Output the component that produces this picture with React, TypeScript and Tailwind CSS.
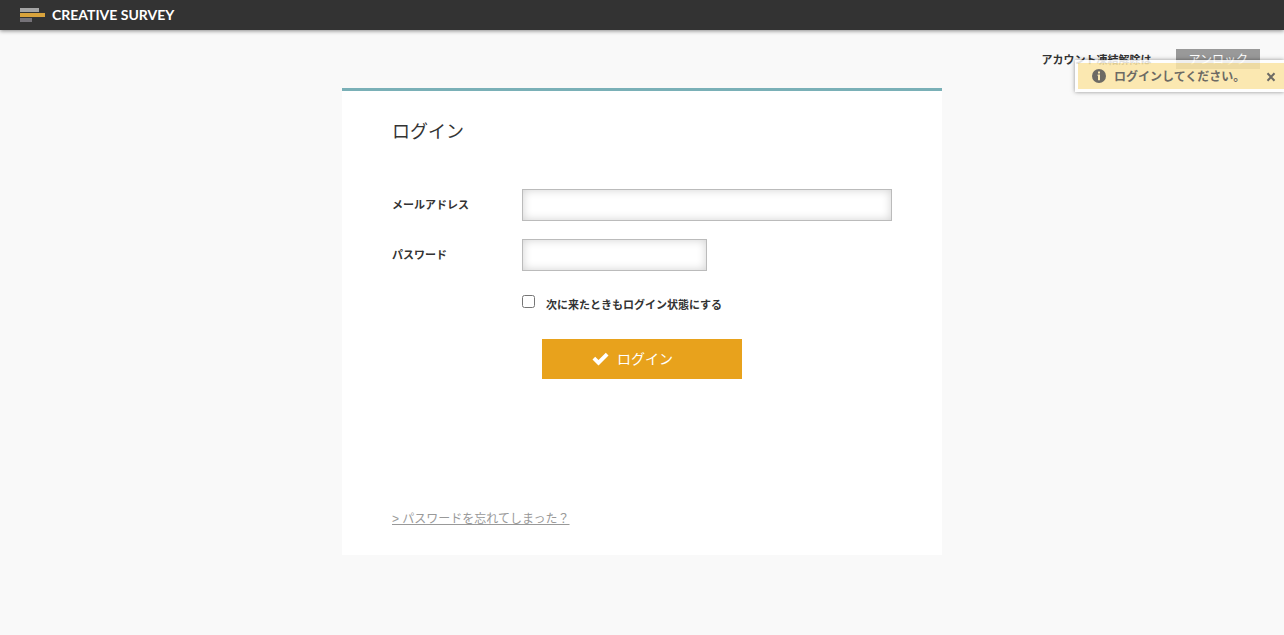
import React, { useState } from "react";

const inputClass =
  "h-8 border border-[#bbb] bg-white px-2 text-sm text-[#333] shadow-[inset_0_0_10px_rgba(0,0,0,0.18)] outline-none focus:border-[#6fb0b6]";

const Logo: React.FC = () => (
  <a href="#" className="flex items-center gap-[7px] text-white">
    <svg className="h-[14px] w-[25px]" viewBox="0 0 25 14" aria-hidden="true">
      <rect width="19" height="4" fill="#a5a5a5" />
      <rect y="5" width="25" height="4" fill="#d9a33c" />
      <rect y="10" width="12" height="4" fill="#757278" />
    </svg>
    <span className="font-[Lato,sans-serif] text-[14px] leading-4 font-bold">CREATIVE SURVEY</span>
  </a>
);

const Notice: React.FC<{ message: string; onClose: () => void }> = ({ message, onClose }) => (
  <div
    role="status"
    className="absolute top-[60px] right-0 flex h-8 w-[209px] items-center border-y-[3px] border-l-[3px] border-white bg-[#fce6a5] pr-2 pl-[14px] opacity-85 shadow-[0_0_4px_rgba(0,0,0,0.5)]"
  >
    <svg className="mr-2 h-[14px] w-[14px]" viewBox="0 0 14 14" aria-hidden="true">
      <circle cx="7" cy="7" r="7" fill="#55524b" />
      <path d="M6 2.6h2v2H6zM5.6 5.6H8v5.6H6V6.9h-.4z" fill="#fce6a5" />
    </svg>
    <p className="pt-px text-xs font-bold whitespace-nowrap text-[#55524b]">{message}</p>
    <button type="button" aria-label="閉じる" onClick={onClose} className="ml-auto cursor-pointer pt-[2px]">
      <svg className="h-[10px] w-[10px]" viewBox="0 0 10 10" aria-hidden="true">
        <path d="M1.5 1.2l7 7.6M8.5 1.2l-7 7.6" stroke="#55524b" strokeWidth="2" />
      </svg>
    </button>
  </div>
);

const App: React.FC = () => {
  const [noticeOpen, setNoticeOpen] = useState(true);

  return (
    <div className="relative min-h-screen bg-[#f9f9f9] font-['Liberation_Sans','Noto_Sans_CJK_JP',sans-serif] text-[#333]">
      <header className="flex h-[30px] items-center bg-[#333] px-5 shadow-[0_1px_4px_rgba(0,0,0,0.45)]">
        <Logo />
      </header>

      <div className="flex items-start justify-end gap-[25px] px-6 pt-[19px]">
        <p className="pt-px text-[11px] leading-5 font-bold">アカウント凍結解除は</p>
        <button type="button" className="h-5 cursor-pointer bg-[#999] px-3 pt-px text-xs text-white">
          アンロック
        </button>
      </div>

      <main className="mx-auto mt-[18px] max-w-[600px] border-t-[3px] border-[#7ab0b7] bg-white px-[50px] pt-7 pb-[26px]">
        <h1 className="text-lg leading-[26px]">ログイン</h1>

        <form className="mt-11" onSubmit={(e) => e.preventDefault()}>
          <div className="flex items-center">
            <label htmlFor="email" className="w-[130px] text-[11px] font-bold">
              メールアドレス
            </label>
            <input id="email" type="email" className={`${inputClass} flex-1`} />
          </div>

          <div className="mt-[18px] flex items-center">
            <label htmlFor="password" className="w-[130px] text-[11px] font-bold">
              パスワード
            </label>
            <input id="password" type="password" className={`${inputClass} w-[185px]`} />
          </div>

          <div className="mt-6 ml-[130px] flex items-start gap-[11px]">
            <input id="remember" type="checkbox" className="h-[13px] w-[13px]" />
            <label htmlFor="remember" className="text-[11px] leading-5 font-bold">
              次に来たときもログイン状態にする
            </label>
          </div>

          <button
            type="submit"
            className="mx-auto mt-6 flex h-10 w-[200px] cursor-pointer items-center gap-2 bg-[#e8a21c] pl-[50px] text-sm text-white"
          >
            <svg className="h-[14px] w-[17px]" viewBox="0 0 17 14" aria-hidden="true">
              <path d="M.5 7.6L3.2 4.8 6.5 8 13.8.8l2.7 2.7L6.5 13.4z" fill="#fff" />
            </svg>
            ログイン
          </button>
        </form>

        <div className="mt-[130px] text-xs leading-5">
          <a href="#" className="text-[#999] underline">
            &gt; パスワードを忘れてしまった？
          </a>
        </div>
      </main>

      {noticeOpen && <Notice message="ログインしてください。" onClose={() => setNoticeOpen(false)} />}
    </div>
  );
};

export default App;
